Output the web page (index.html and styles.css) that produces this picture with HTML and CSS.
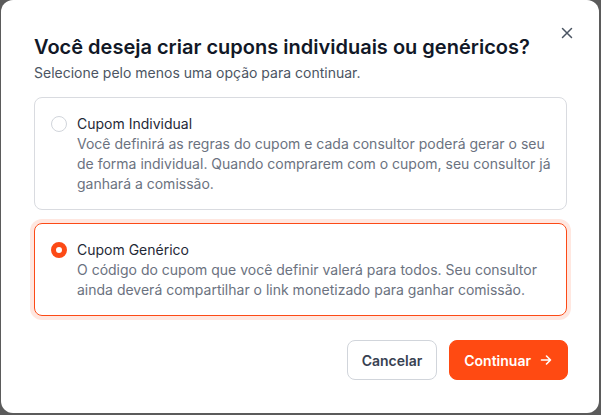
FILE: index.html
```html
<!DOCTYPE html>
<html lang="pt-BR">
<head>
<meta charset="utf-8">
<link rel="stylesheet" href="styles.css">
</head>
<body>
<div class="dialog">
  <button class="close" aria-label="Fechar">
    <svg width="12" height="12" viewBox="0 0 12 12"><path d="M1.5 1.5l9 9M10.5 1.5l-9 9" stroke="#4b5563" stroke-width="1.5" stroke-linecap="round" fill="none"/></svg>
  </button>
  <h1 class="title">Você deseja criar cupons individuais ou genéricos?</h1>
  <p class="subtitle">Selecione pelo menos uma opção para continuar.</p>
  <div class="options">
    <div class="option">
      <span class="radio"></span>
      <div class="option-text">
        <div class="option-title">Cupom Individual</div>
        <div class="option-desc">Você definirá as regras do cupom e cada consultor poderá gerar o seu de forma individual. Quando comprarem com o cupom, seu consultor já ganhará a comissão.</div>
      </div>
    </div>
    <div class="option selected">
      <span class="radio checked"></span>
      <div class="option-text">
        <div class="option-title">Cupom Genérico</div>
        <div class="option-desc">O código do cupom que você definir valerá para todos. Seu consultor ainda deverá compartilhar o link monetizado para ganhar comissão.</div>
      </div>
    </div>
  </div>
  <div class="actions">
    <button class="btn btn-secondary">Cancelar</button>
    <button class="btn btn-primary">Continuar
      <svg width="14" height="14" viewBox="0 0 14 14"><path d="M2.5 7h9M7.5 3l4 4-4 4" stroke="#fff" stroke-width="1.6" stroke-linecap="round" stroke-linejoin="round" fill="none"/></svg>
    </button>
  </div>
</div>
</body>
</html>
```
FILE: styles.css
```css
* { box-sizing: border-box; }
html, body { margin: 0; height: 100%; }
body {
  background: #5b5b5b;
  font-family: Inter, "Noto Sans", sans-serif;
  overflow: hidden;
}
.dialog {
  position: relative;
  margin-left: 1px;
  width: 598px;
  height: 413px;
  background: #fff;
  border-radius: 12px;
  padding: 33px 32px 0 33px;
}
.close {
  position: absolute;
  top: 27px;
  right: 26px;
  width: 12px;
  height: 12px;
  padding: 0;
  border: 0;
  background: none;
  display: flex;
}
.title {
  margin: 0;
  font-size: 20px;
  line-height: 28px;
  font-weight: 600;
  color: #111827;
}
.subtitle {
  margin: 2px 0 0;
  font-size: 14px;
  line-height: 20px;
  color: #4b5563;
}
.options {
  margin-top: 14px;
  display: flex;
  flex-direction: column;
  gap: 13px;
}
.option {
  display: flex;
  gap: 10px;
  padding: 16px 12px 15px 16px;
  border: 1px solid #d9dbe0;
  border-radius: 8px;
}
.option.selected {
  border-color: #fc4a16;
  box-shadow: 0 0 0 4px #ffe7e0;
}
.radio {
  flex: none;
  width: 16px;
  height: 16px;
  margin-top: 2px;
  border-radius: 50%;
  border: 1px solid #d1d5db;
  background: #fff;
}
.radio.checked {
  border: 5px solid #fc4a16;
}
.option-title {
  font-size: 14px;
  line-height: 20px;
  font-weight: 400;
  color: #1f2937;
}
.option-desc {
  font-size: 14px;
  line-height: 20px;
  color: #6b7280;
}
.actions {
  margin-top: 24px;
  margin-right: -1px;
  display: flex;
  justify-content: flex-end;
  gap: 12px;
}
.btn {
  height: 40px;
  border-radius: 8px;
  font-family: inherit;
  font-size: 14px;
  font-weight: 600;
  padding: 0 14px;
  display: flex;
  align-items: center;
  gap: 8px;
}
.btn-secondary {
  background: #fff;
  border: 1px solid #d1d5db;
  color: #374151;
}
.btn-primary {
  background: #ff4a12;
  border: 1px solid #ff4a12;
  color: #fff;
}
```
